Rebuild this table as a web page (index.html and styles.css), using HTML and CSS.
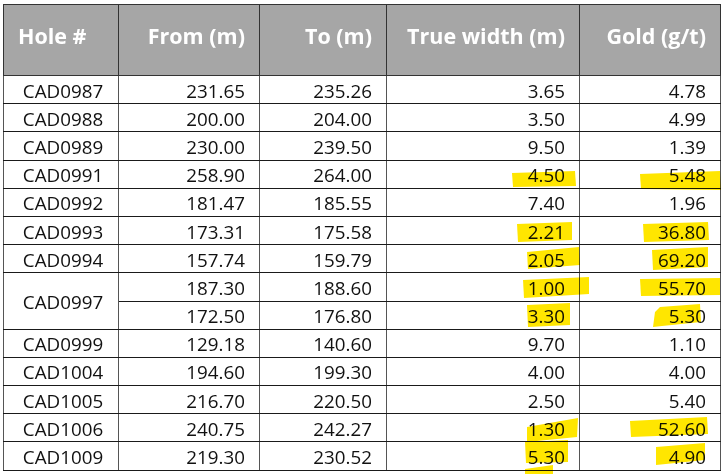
FILE: index.html
```html
<!DOCTYPE html>
<html>
<head>
<meta charset="utf-8">
<link rel="stylesheet" href="styles.css">
</head>
<body>
<div class="sheet">
<table class="drill">
  <colgroup>
    <col class="c1"><col class="c2"><col class="c3"><col class="c4"><col class="c5">
  </colgroup>
  <thead>
    <tr>
      <th class="left">Hole #</th>
      <th>From (m)</th>
      <th>To (m)</th>
      <th>True width (m)</th>
      <th>Gold (g/t)</th>
    </tr>
  </thead>
  <tbody>
    <tr><td class="hole">CAD0987</td><td>231.65</td><td>235.26</td><td>3.65</td><td>4.78</td></tr>
    <tr><td class="hole">CAD0988</td><td>200.00</td><td>204.00</td><td>3.50</td><td>4.99</td></tr>
    <tr><td class="hole">CAD0989</td><td>230.00</td><td>239.50</td><td>9.50</td><td>1.39</td></tr>
    <tr><td class="hole">CAD0991</td><td>258.90</td><td>264.00</td><td>4.50</td><td>5.48</td></tr>
    <tr><td class="hole">CAD0992</td><td>181.47</td><td>185.55</td><td>7.40</td><td>1.96</td></tr>
    <tr><td class="hole">CAD0993</td><td>173.31</td><td>175.58</td><td>2.21</td><td>36.80</td></tr>
    <tr><td class="hole">CAD0994</td><td>157.74</td><td>159.79</td><td>2.05</td><td>69.20</td></tr>
    <tr><td class="hole" rowspan="2">CAD0997</td><td>187.30</td><td>188.60</td><td>1.00</td><td>55.70</td></tr>
    <tr><td>172.50</td><td>176.80</td><td>3.30</td><td>5.30</td></tr>
    <tr><td class="hole">CAD0999</td><td>129.18</td><td>140.60</td><td>9.70</td><td>1.10</td></tr>
    <tr><td class="hole">CAD1004</td><td>194.60</td><td>199.30</td><td>4.00</td><td>4.00</td></tr>
    <tr><td class="hole">CAD1005</td><td>216.70</td><td>220.50</td><td>2.50</td><td>5.40</td></tr>
    <tr><td class="hole">CAD1006</td><td>240.75</td><td>242.27</td><td>1.30</td><td>52.60</td></tr>
    <tr><td class="hole">CAD1009</td><td>219.30</td><td>230.52</td><td>5.30</td><td>4.90</td></tr>
  </tbody>
</table>
<svg class="marker" width="723" height="474" viewBox="0 0 723 474" aria-hidden="true">
  <g fill="#ffe600">
    <polygon points="512,173 575,171 576,186 513,187"/>
    <polygon points="640,174 720,171 721,190 641,189"/>
    <polygon points="517,224 572,222 572,240 518,242"/>
    <polygon points="643,224 708,222 709,240 644,242"/>
    <polygon points="527,252 579,247 580,265 528,269"/>
    <polygon points="652,250 708,247 708,267 653,270"/>
    <polygon points="523,280 589,277 589,294 524,298"/>
    <polygon points="640,279 720,278 720,295 641,296"/>
    <polygon points="527,305 570,303 570,325 528,327"/>
    <polygon points="653,327 655,312 660,307 700,304 701,322 662,326"/>
    <polygon points="527,427 578,418 577,437 527,442"/>
    <polygon points="630,421 707,417 708,434 631,437"/>
    <polygon points="525,442 568,440 568,462 526,463"/>
    <polygon points="525,469 553,465 553,474 525,474"/>
    <polygon points="656,447 705,443 705,460 656,465"/>
  </g>
</svg>
</div>
</body>
</html>
```

FILE: styles.css
```css
html, body {
  margin: 0;
  padding: 0;
  background: #ffffff;
}

.sheet {
  position: relative;
  width: 723px;
  height: 474px;
  overflow: hidden;
}

.drill {
  margin: 4px 0 0 3px;
  border-collapse: collapse;
  table-layout: fixed;
  width: 717px;
  font-family: "Open Sans", "Noto Sans", "Liberation Sans", sans-serif;
  font-size: 18.8px;
  color: #111;
  border: 1px solid #555;
}

.c1 { width: 115px; }
.c2 { width: 141px; }
.c3 { width: 127px; }
.c4 { width: 193px; }
.c5 { width: 141px; }

.drill th {
  height: 71px;
  background: #a6a6a6;
  color: #ffffff;
  font-weight: 700;
  font-size: 21.5px;
  text-align: right;
  padding: 0 14px 9px 14px;
  box-sizing: border-box;
  border: 1px solid #333;
  vertical-align: middle;
}

.drill th.left {
  text-align: left;
}

.drill td {
  height: 28.2px;
  padding: 2px 14px 0 14px;
  box-sizing: border-box;
  text-align: right;
  vertical-align: middle;
  line-height: 24px;
  border-top: 1px solid #1a1a1a;
  border-bottom: 1px solid #1a1a1a;
  border-left: 1px solid #555;
  border-right: 1px solid #555;
}

.drill td.hole {
  text-align: center;
  padding: 2px 6px 0 10px;
}

.marker {
  position: absolute;
  left: 0;
  top: 0;
  pointer-events: none;
  mix-blend-mode: multiply;
}
```
